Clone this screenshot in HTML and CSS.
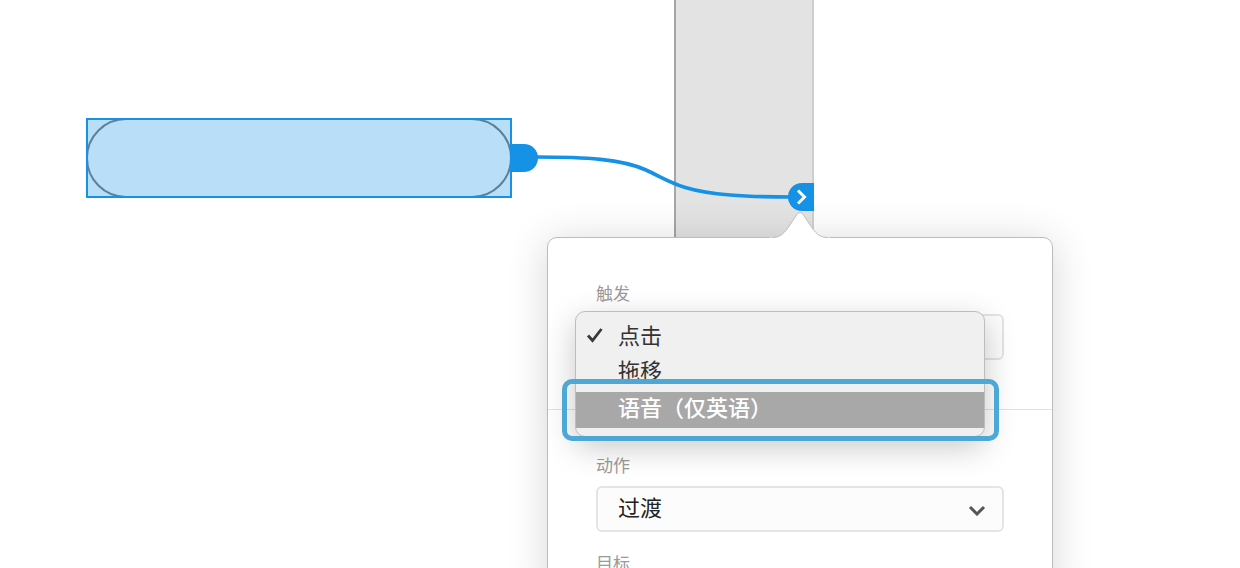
FILE: index.html
```html
<!DOCTYPE html>
<html lang="zh-CN">
<head>
    <meta charset="UTF-8">
    <title>原型连接</title>
    <link rel="stylesheet" href="styles.css">
</head>
<body>
    <div class="canvas">
        <div class="artboard"></div>

        <div class="layer">
            <div class="layer-pill"></div>
        </div>
        <div class="wire-start"></div>

        <div class="popover">
            <section class="panel panel-trigger">
                <div class="field-label">触发</div>
                <div class="select"></div>
            </section>
            <section class="panel">
                <div class="field-label">动作</div>
                <div class="select">
                    <span class="select-value">过渡</span>
                    <svg class="select-arrow" width="18" height="11" viewBox="0 0 18 11">
                        <path d="M2 2l7 7 7-7" fill="none" stroke="#555" stroke-width="3"/>
                    </svg>
                </div>
                <div class="field-label field-label-next">目标</div>
            </section>
        </div>

        <svg class="popover-tip" width="64" height="28" viewBox="0 0 64 28">
            <path d="M2 26.5H4C11 26.5 14 24 18 19.5L29 3.5C31 1 33 1 35 3.5L46 19.5C50 24 53 26.5 60 26.5H62V28H2Z" fill="#fff"/>
            <path d="M4 26.5C11 26.5 14 24 18 19.5L29 3.5C31 1 33 1 35 3.5L46 19.5C50 24 53 26.5 60 26.5" fill="none" stroke="#bdbdbd"/>
        </svg>

        <svg class="wire" width="1240" height="568" viewBox="0 0 1240 568">
            <path d="M536 157C585 157 622 159 646 170C670 181 680 191 730 195C755 197 775 197 792 197" fill="none" stroke="#1592e6" stroke-width="3.6"/>
        </svg>
        <div class="wire-end">
            <svg width="14" height="18" viewBox="0 0 14 18">
                <path d="M4 2.5l6.5 6.5-6.5 6.5" fill="none" stroke="#fff" stroke-width="3"/>
            </svg>
        </div>

        <ul class="menu">
            <li class="menu-item">
                <svg class="menu-check" width="18" height="16" viewBox="0 0 18 16">
                    <path d="M2 8.5 6.5 13.5 15.5 2" fill="none" stroke="#3a3a3a" stroke-width="2.8"/>
                </svg>
                点击
            </li>
            <li class="menu-item">拖移</li>
            <li class="menu-item menu-item-active">语音（仅英语）</li>
        </ul>

        <div class="callout"></div>
    </div>
</body>
</html>
```

FILE: styles.css
```css
html, body {
    margin: 0;
    padding: 0;
    background: white;
    overflow: hidden;
}

body {
    font-family: 'Noto Sans CJK SC', 'Noto Sans', sans-serif;
    color: #333;
}

.canvas {
    position: relative;
    width: 1240px;
    height: 568px;
    overflow: hidden;
}

/* prototype canvas */
.artboard {
    position: absolute;
    left: 674px;
    top: -4px;
    width: 136px;
    height: 260px;
    background: #e3e3e3;
    border-left: 2px solid #a6a6a6;
    border-right: 2px solid #cfcfcf;
}

.layer {
    position: absolute;
    left: 86px;
    top: 118px;
    width: 426px;
    height: 80px;
    background: #b9def7;
}

/* selection frame sits over the shape */
.layer::after {
    content: '';
    position: absolute;
    inset: 0;
    border: 2px solid #1592e6;
}

.layer-pill {
    height: 100%;
    box-sizing: border-box;
    border: 2px solid #5f7f99;
    border-radius: 40px;
}

.wire-start {
    position: absolute;
    left: 512px;
    top: 144px;
    width: 26px;
    height: 28px;
    background: #1592e6;
    border-radius: 0 14px 14px 0;
}

.wire {
    position: absolute;
    left: 0;
    top: 0;
}

.wire-end {
    position: absolute;
    left: 788px;
    top: 183px;
    width: 26px;
    height: 28px;
    display: flex;
    align-items: center;
    justify-content: center;
    background: #1592e6;
    border-radius: 14px 0 0 14px;
}

/* popover */
.popover {
    position: absolute;
    left: 547px;
    top: 237px;
    width: 506px;
    height: 360px;
    box-sizing: border-box;
    background: white;
    border: 1px solid #bdbdbd;
    border-radius: 10px;
    box-shadow: 0 4px 40px rgba(0, 0, 0, 0.16);
}

.popover-tip {
    position: absolute;
    left: 768px;
    top: 211px;
}

.panel {
    padding: 43px 48px 0;
}

.panel-trigger {
    height: 128px;
    padding-bottom: 0;
    border-bottom: 1px solid #e3e3e3;
}

.panel + .panel {
    padding-top: 43px;
}

.field-label {
    height: 24px;
    margin-bottom: 9px;
    font-size: 17px;
    line-height: 24px;
    color: #9a9a9a;
}

.field-label-next {
    margin-top: 19px;
}

.select {
    height: 46px;
    box-sizing: border-box;
    display: flex;
    align-items: center;
    justify-content: space-between;
    padding: 0 16px 0 20px;
    background: #fcfcfc;
    border: 2px solid #e4e4e4;
    border-radius: 6px;
    font-size: 22px;
    color: #222;
}

.select-value {
    margin-top: -6px;
}

.select-arrow {
    margin-top: 2px;
}

/* open dropdown over the trigger select */
.menu {
    position: absolute;
    left: 575px;
    top: 311px;
    width: 410px;
    height: 126px;
    box-sizing: border-box;
    margin: 0;
    padding: 5px 0 0;
    list-style: none;
    background: #f0f0f0;
    border: 1px solid #bdbdbd;
    border-radius: 10px;
    box-shadow: 0 10px 32px rgba(0, 0, 0, 0.22);
    font-size: 22px;
    overflow: hidden;
}

.menu-item {
    position: relative;
    height: 35px;
    padding-left: 42px;
    line-height: 35px;
    color: #333;
}

.menu-item-active {
    height: 36px;
    margin-top: 5px;
    line-height: 28px;
    background: #a8a8a8;
    color: white;
    font-weight: 500;
}

.menu-check {
    position: absolute;
    left: 10px;
    top: 10px;
}

.callout {
    position: absolute;
    left: 562px;
    top: 379px;
    width: 437px;
    height: 62px;
    box-sizing: border-box;
    border: 5px solid #4ea8d6;
    border-radius: 10px;
}
```
